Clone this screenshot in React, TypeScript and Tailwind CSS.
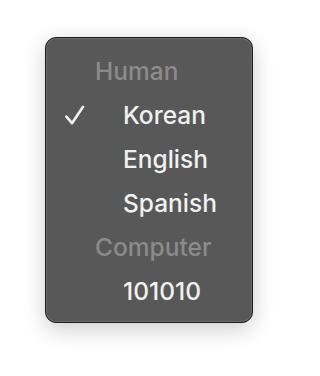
export default function App() {
  const rows = [
    { label: "Human", header: true },
    { label: "Korean", checked: true },
    { label: "English" },
    { label: "Spanish" },
    { label: "Computer", header: true },
    { label: "101010" },
  ];

  return (
    <div className="flex min-h-[376px] w-[298px] justify-center bg-white pt-[37px]">
      <div className="h-[286px] w-[208px] rounded-[11px] border border-[#1c1c1c] bg-[#585858] pt-[11px] pb-[9px] shadow-[inset_0_0_0_1px_#6c6c6c,0_6px_22px_rgba(0,0,0,0.2)] font-['Inter',sans-serif] text-[24.5px] font-medium leading-[44px] select-none">
        {rows.map((row) =>
          row.header ? (
            <div key={row.label} className="h-[44px] pl-[49px] text-[#8b8b8b]">
              {row.label}
            </div>
          ) : (
            <div key={row.label} className="flex h-[44px] items-center pl-[19px] text-[#f1f1f1]">
              <div className="flex w-[58px] items-center">
                {row.checked && (
                  <svg width="20" height="20" viewBox="0 0 20 20" fill="none">
                    <path
                      d="M1.4 11.6 L7 18.2 L18 1.8"
                      stroke="#f1f1f1"
                      strokeWidth="2.6"
                      strokeLinecap="round"
                      strokeLinejoin="round"
                    />
                  </svg>
                )}
              </div>
              <span>{row.label}</span>
            </div>
          )
        )}
      </div>
    </div>
  );
}
